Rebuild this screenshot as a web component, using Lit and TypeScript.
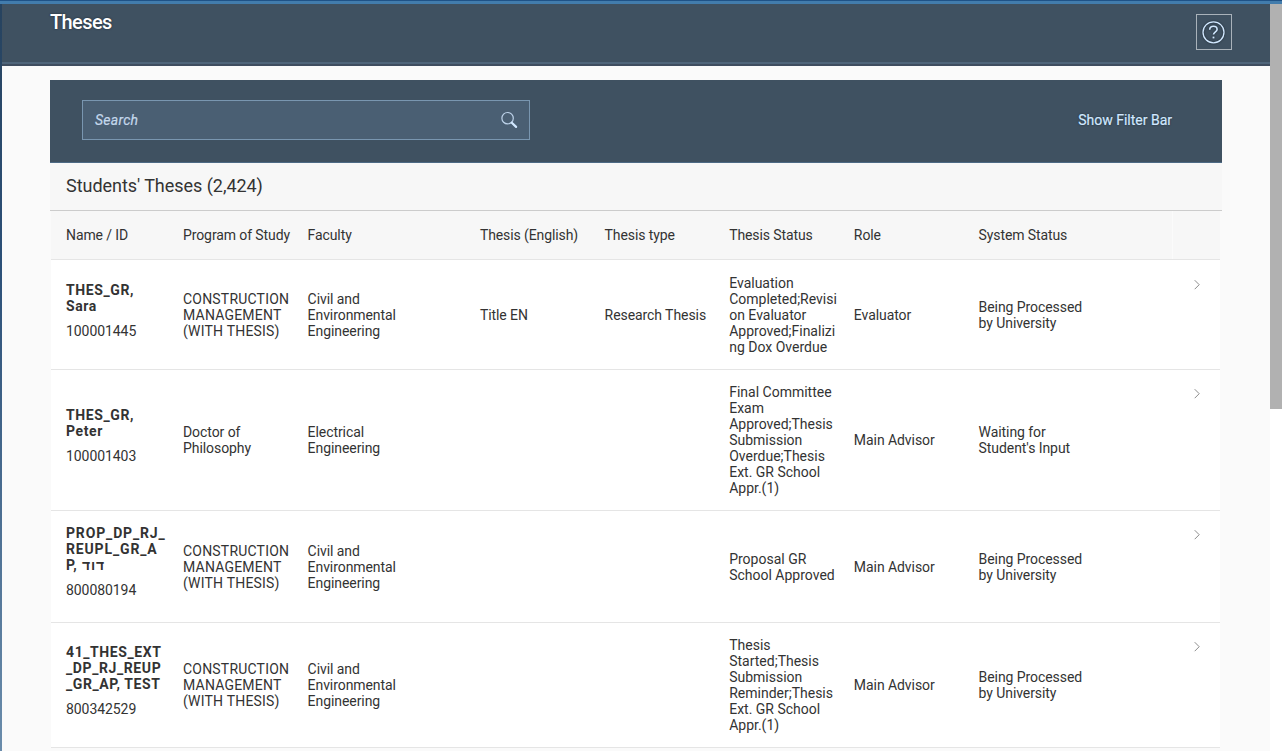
import { LitElement, html, css } from "lit";
import { customElement } from "lit/decorators.js";

interface Thesis {
  size: string;
  name: string[];
  id: string;
  cells: string[][];
}

const COLUMNS = ["Program of Study", "Faculty", "Thesis (English)", "Thesis type", "Thesis Status", "Role", "System Status"];

const CIVIL = ["Civil and", "Environmental", "Engineering"];
const CONSTRUCTION = ["CONSTRUCTION", "MANAGEMENT", "(WITH THESIS)"];
const PROCESSED = ["Being Processed", "by University"];

const ROWS: Thesis[] = [
  {
    size: "r1",
    name: ["THES_GR,", "Sara"],
    id: "100001445",
    cells: [
      CONSTRUCTION, CIVIL, ["Title EN"], ["Research Thesis"],
      ["Evaluation", "Completed;Revisi", "on Evaluator", "Approved;Finalizi", "ng Dox Overdue"],
      ["Evaluator"], PROCESSED,
    ],
  },
  {
    size: "r2",
    name: ["THES_GR,", "Peter"],
    id: "100001403",
    cells: [
      ["Doctor of", "Philosophy"], ["Electrical", "Engineering"], [], [],
      ["Final Committee", "Exam", "Approved;Thesis", "Submission", "Overdue;Thesis", "Ext. GR School", "Appr.(1)"],
      ["Main Advisor"], ["Waiting for", "Student's Input"],
    ],
  },
  {
    size: "r3",
    name: ["PROP_DP_RJ_", "REUPL_GR_A", "P, דוד"],
    id: "800080194",
    cells: [
      CONSTRUCTION, CIVIL, [], [],
      ["Proposal GR", "School Approved"],
      ["Main Advisor"], PROCESSED,
    ],
  },
  {
    size: "r4",
    name: ["41_THES_EXT", "_DP_RJ_REUP", "_GR_AP, TEST"],
    id: "800342529",
    cells: [
      CONSTRUCTION, CIVIL, [], [],
      ["Thesis", "Started;Thesis", "Submission", "Reminder;Thesis", "Ext. GR School", "Appr.(1)"],
      ["Main Advisor"], PROCESSED,
    ],
  },
];

const lines = (items: string[]) => items.map((t) => html`<div><span>${t}</span></div>`);

@customElement("app-root")
export class AppRoot extends LitElement {
  static styles = css`
    :host {
      display: flex;
      flex-direction: column;
      box-sizing: border-box;
      width: 100%;
      height: 751px;
      overflow: hidden;
      font-family: Roboto, "Liberation Sans", sans-serif;
      font-size: 14px;
      line-height: 16px;
      color: #333;
      background: #fafafa;
    }
    * { box-sizing: border-box; }
    .strip { flex: none; height: 4px; background: #427cac; border-top: 1px solid #1f5286; }
    .body { flex: 1; display: flex; min-height: 0; }
    .edge { flex: none; width: 2px; background: linear-gradient(#27435f, #2c5078 35%, #6a8cab); }
    .main { flex: 1; min-width: 0; overflow: hidden; }
    .track { flex: none; width: 12px; background: #fff; }
    .thumb { height: 405px; background: #b1b1b1; }
    .header {
      height: 62px;
      display: flex;
      justify-content: space-between;
      padding: 0 38px 0 48px;
      background: linear-gradient(#3f5161 0 58px, #4f657a 58px 60px, #3f4d5f 60px);
    }
    .title {
      margin: 0;
      padding-top: 6px;
      font-size: 20px;
      line-height: 24px;
      font-weight: 500;
      letter-spacing: -0.6px;
      color: #fff;
      text-shadow: 0 0 2px #1c2731;
    }
    .help {
      width: 36px;
      height: 36px;
      margin-top: 10px;
      display: grid;
      place-items: center;
      border: 1px solid #a9b2ba;
      color: #d1e8ff;
    }
    .help svg { display: block; filter: drop-shadow(0 0 1px #1c2731); }
    .page { padding: 14px 48px 0; }
    .toolbar {
      height: 83px;
      padding: 20px 50px 0 32px;
      display: flex;
      justify-content: space-between;
      align-items: flex-start;
      background: #3f5161;
      border-bottom: 1px solid #4d6a85;
    }
    .search {
      width: 448px;
      height: 40px;
      display: flex;
      align-items: center;
      justify-content: space-between;
      padding: 0 11px 0 12px;
      background: #4a5f73;
      border: 1px solid #7996b0;
      color: #c4d8ec;
      font-style: italic;
      letter-spacing: 0.25px;
      -webkit-text-stroke: 0.2px #c4d8ec;
    }
    .filter {
      line-height: 40px;
      color: #d1e8ff;
      -webkit-text-stroke: 0.2px #d1e8ff;
      text-shadow: 0 0 2px #1c2731;
    }
    .caption {
      height: 48px;
      padding-left: 16px;
      font-size: 18px;
      line-height: 46px;
      letter-spacing: -0.04px;
      background: #f7f7f7;
      border-bottom: 1px solid #ccc;
    }
    .table { margin: 0 2px 0 1px; background: #fff; }
    .row {
      display: grid;
      grid-template-columns: 117px 124.6px 172.3px 124.7px 124.6px 124.7px 124.7px 193px 1fr;
      padding-left: 15px;
      align-items: center;
      border-bottom: 1px solid #e5e5e5;
      white-space: nowrap;
      letter-spacing: -0.07px;
    }
    .head { height: 49px; background: #f7f7f7; letter-spacing: -0.1px; }
    .sep { height: 48px; border-left: 1px solid #fbfbfb; }
    .r1 { height: 110px; }
    .r2 { height: 141px; }
    .r3 { height: 112px; }
    .r4 { height: 125px; }
    .name { font-weight: 700; letter-spacing: 0.6px; }
    .r3 .name { letter-spacing: 0.85px; }
    .id { margin: 9px 0; }
    .r3 .id { margin-bottom: 11px; }
    .caps { letter-spacing: 0.2px; }
    .status { letter-spacing: 0; }
    .nav { align-self: start; padding: 18px 0 0 20px; }
    .r1 .nav { padding-top: 19px; }
    .nav svg { display: block; }
  `;

  private cell(text: string[], index: number) {
    const kind = text === CONSTRUCTION ? "caps" : index === 4 ? "status" : "cell";
    return html`<div class=${kind}>${lines(text)}</div>`;
  }

  render() {
    return html`
      <div class="strip"></div>
      <div class="body">
        <div class="edge"></div>
        <div class="main">
          <header class="header">
            <h1 class="title"><span>Theses</span></h1>
            <div class="help">
              <svg width="24" height="24" viewBox="0 0 24 24" fill="none" stroke="currentColor" stroke-width="1.3">
                <circle cx="11.500" cy="12.300" r="10.500" />
                <path d="M7.700 9.700C7.700 7.400 9.200 6.300 11.400 6.300s3.700 1.200 3.700 3.100c0 2.300-3.600 2.500-3.600 5.200" stroke-width="1.600" />
                <path d="M10.600 16.600h1.800v1.800h-1.800z" fill="currentColor" stroke="none" />
              </svg>
            </div>
          </header>
          <div class="page">
            <div class="toolbar">
              <div class="search">
                <span>Search</span>
                <svg width="18" height="18" viewBox="0 0 18 18" fill="none" stroke="#d1e8ff">
                  <circle cx="7.600" cy="7.200" r="5.700" stroke-width="1.200" stroke-opacity="0.85" />
                  <path d="M11.800 11.700l4.300 4.200" stroke-width="2.200" stroke-linecap="round" />
                </svg>
              </div>
              <span class="filter">Show Filter Bar</span>
            </div>
            <div class="caption"><span>Students' Theses (2,424)</span></div>
            <div class="table">
              <div class="row head">
                <span>Name / ID</span>
                ${COLUMNS.map((c) => html`<div><span>${c}</span></div>`)}
                <div class="sep"></div>
              </div>
              ${ROWS.map(
                (r) => html`
                  <div class="row ${r.size}">
                    <div>
                      <div class="name">${lines(r.name)}</div>
                      <div class="id"><span>${r.id}</span></div>
                    </div>
                    ${r.cells.map((c, i) => this.cell(c, i))}
                    <div class="nav">
                      <svg width="10" height="12" viewBox="0 0 10 12" fill="none" stroke="#8c8c8c">
                        <path d="M2.700 1.200L7.200 5.700l-4.500 4.500" />
                      </svg>
                    </div>
                  </div>
                `,
              )}
            </div>
          </div>
        </div>
        <div class="track"><div class="thumb"></div></div>
      </div>
    `;
  }
}
